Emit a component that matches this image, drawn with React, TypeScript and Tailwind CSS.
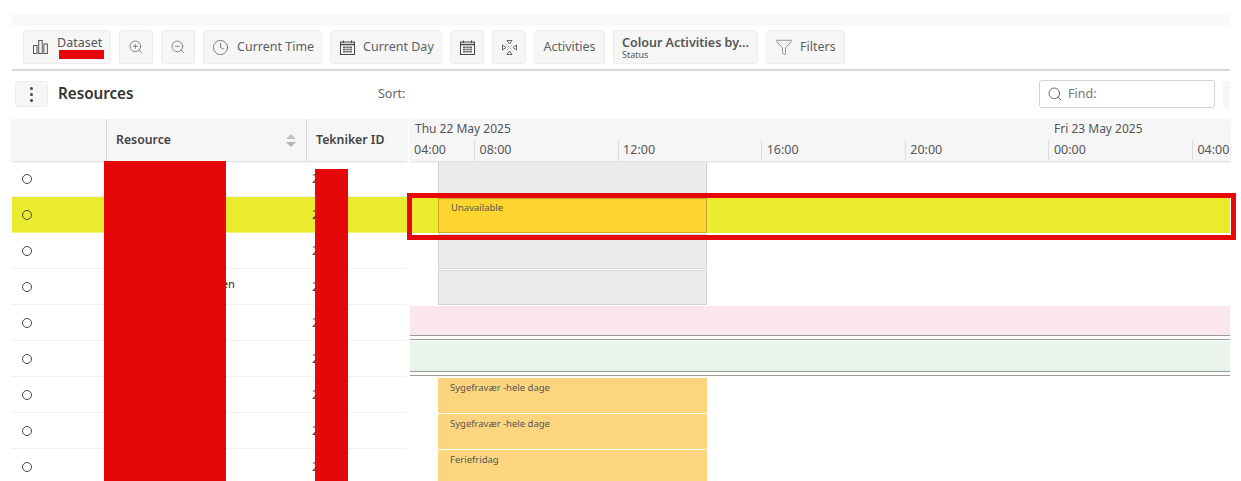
import { Clock, Filter, Search, ZoomIn, ZoomOut } from "lucide-react";
import type { ReactNode } from "react";

const BarsIcon = () => (
  <svg width="15" height="16" viewBox="0 0 15 16" fill="none" stroke="#555" strokeWidth="1">
    <rect x="0.5" y="6.5" width="3.5" height="8" />
    <rect x="5.7" y="1.5" width="3.5" height="13" />
    <rect x="10.9" y="5" width="3.5" height="9.5" />
  </svg>
);

const CalendarIcon = () => (
  <svg width="15" height="15" viewBox="0 0 15 15" fill="none" stroke="#444" strokeWidth="1">
    <rect x="0.5" y="2" width="14" height="12.5" />
    <path d="M3.5 0.5v2.5M11.5 0.5v2.5" />
    <path d="M0.5 4.5h14" strokeWidth="1.4" />
    <rect x="3" y="6.5" width="9" height="6" fill="#666" stroke="none" />
    <path d="M3 8.5h9M3 10.5h9M6 6.5v6M9 6.5v6" stroke="#fff" strokeWidth="0.6" />
  </svg>
);

const FitIcon = () => (
  <svg width="15" height="15" viewBox="0 0 15 15" fill="none" stroke="#555" strokeWidth="0.9">
    <path d="M5 0.5h5L7.5 4z" />
    <path d="M5 14.5h5L7.5 11z" />
    <path d="M0.5 5v5L4 7.5z" />
    <path d="M14.5 5v5L11 7.5z" />
    <path d="M4.5 4.5l6 6M10.5 4.5l-6 6" stroke="#aaa" strokeWidth="0.7" />
  </svg>
);

const Btn = ({ children, className = "" }: { children: ReactNode; className?: string }) => (
  <div
    className={
      "h-[34px] shrink-0 flex items-center rounded-[3px] border border-[#ededed] bg-[#f6f6f6] text-[#5f5f5f] text-[12.5px] " +
      className
    }
  >
    {children}
  </div>
);

const ticks = ["08:00", "12:00", "16:00", "20:00", "00:00", "04:00"];

const rows = [0, 1, 2, 3, 4, 5, 6, 7, 8];

const Bar = ({ label, className }: { label?: string; className: string }) => (
  <div className={"ml-[28px] w-[269px] pl-[12px] text-[9.5px] leading-[12px] text-[#555] " + className}>
    {label}
  </div>
);

const GanttRow = ({ index }: { index: number }) => {
  if (index === 0) {
    return (
      <div className="h-[36px] pt-[1px]">
        <Bar className="h-[35px] bg-[#ebebeb] border-x border-[#d4d4d4]" />
      </div>
    );
  }
  if (index === 1) {
    return (
      <div className="h-[36px] pt-[1px] bg-[#ebeb2e]">
        <Bar
          label="Unavailable"
          className="h-[35px] pl-[11px] pt-[3px] bg-[#fcd52e] border border-[#c9a62a]"
        />
      </div>
    );
  }
  if (index === 2 || index === 3) {
    return (
      <div className="h-[36px] pt-[1px]">
        <Bar className="h-[35px] bg-[#ebebeb] border border-[#d4d4d4]" />
      </div>
    );
  }
  if (index === 4 || index === 5) {
    return (
      <div className={"h-[36px] " + (index === 4 ? "pt-[1px]" : "")}>
        <div className={index === 4 ? "h-[29px] bg-[#fbe6f0]" : "h-[30px] bg-[#ebf4eb]"} />
        <div className="h-[5px] border-y border-[#9a9a9a]" />
      </div>
    );
  }
  const label = index === 8 ? "Feriefridag" : "Sygefravær -hele dage";
  return (
    <div className="h-[36px] pt-[1px]">
      <Bar label={label} className="h-[35px] pt-[4px] bg-[#fcd57e]" />
    </div>
  );
};

export default function App() {
  return (
    <div
      className="relative h-[481px] w-[1241px] overflow-hidden bg-white pt-[14px] pl-[12px] pr-[11px] text-[#444]"
      style={{ fontFamily: '"Noto Sans", "Liberation Sans", sans-serif' }}
    >
      <div className="h-[12px] bg-[#f9f9f9]" />

      {/* toolbar */}
      <div className="h-[45px] border-b-2 border-[#d9d9d9] pl-[11px] pt-[4px] flex gap-[8px]">
        <Btn className="w-[88px] pl-[9px] gap-[9px]">
          <BarsIcon />
          <div className="leading-[13px] text-[12.5px] text-[#555]">
            Dataset
            <div className="h-[9px]" />
          </div>
        </Btn>
        <Btn className="w-[34px] justify-center">
          <ZoomIn size={16} strokeWidth={1.1} />
        </Btn>
        <Btn className="w-[34px] justify-center">
          <ZoomOut size={16} strokeWidth={1.1} />
        </Btn>
        <Btn className="w-[119px] pl-[8px] gap-[8px]">
          <Clock size={17} strokeWidth={1.1} />
          Current Time
        </Btn>
        <Btn className="w-[112px] pl-[9px] gap-[8px]">
          <CalendarIcon />
          Current Day
        </Btn>
        <Btn className="w-[34px] justify-center">
          <CalendarIcon />
        </Btn>
        <Btn className="w-[34px] justify-center">
          <FitIcon />
        </Btn>
        <Btn className="w-[71px] justify-center">Activities</Btn>
        <Btn className="w-[145px] pl-[8px]">
          <div className="pt-[1px]">
            <div className="font-semibold text-[12.5px] leading-[14px] text-[#555]">Colour Activities by...</div>
            <div className="text-[9px] leading-[10px] text-[#555]">Status</div>
          </div>
        </Btn>
        <Btn className="w-[79px] pl-[8px] gap-[7px]">
          <Filter size={18} strokeWidth={0.9} />
          Filters
        </Btn>
      </div>

      {/* resources bar */}
      <div className="h-[48px] flex items-center pl-[3px] pb-[2px]">
        <div className="w-[33px] h-[26px] rounded-[3px] border border-[#ededed] bg-[#f6f6f6] flex flex-col items-center justify-center gap-[3px]">
          <span className="w-[3px] h-[3px] rounded-full bg-[#444]" />
          <span className="w-[3px] h-[3px] rounded-full bg-[#444]" />
          <span className="w-[3px] h-[3px] rounded-full bg-[#444]" />
        </div>
        <div className="ml-[10px] w-[320px] pb-[1px] text-[15.2px] font-semibold text-[#333]">Resources</div>
        <div className="text-[12.5px] text-[#666]">Sort:</div>
        <div className="ml-auto mr-[8px] w-[176px] h-[28px] rounded-[3px] border border-[#d4d4d4] flex items-center pl-[7px] gap-[5px] text-[12.5px] text-[#777]">
          <Search size={16} strokeWidth={1.3} className="text-[#555]" />
          <span className="pt-[1px]">Find:</span>
        </div>
        <div className="w-[7px] h-[26px] bg-[#f6f6f6] rounded-l-[3px]" />
      </div>

      {/* grid and timeline */}
      <div className="flex">
        <div className="w-[395px] shrink-0">
          <div className="h-[42px] flex bg-[#f6f6f6] shadow-[0_1px_2px_#d8d8d8] text-[12.3px] font-semibold text-[#444]">
            <div className="w-[95px] border-r border-[#d4d4d4]" />
            <div className="w-[200px] border-r border-[#d4d4d4] pl-[9px] pr-[10px] flex items-center justify-between">
              Resource
              <div className="flex flex-col gap-[3px]">
                <span className="w-0 h-0 border-x-[5px] border-x-transparent border-b-[5px] border-b-[#c4c4c4]" />
                <span className="w-0 h-0 border-x-[5px] border-x-transparent border-t-[5px] border-t-[#b4b4b4]" />
              </div>
            </div>
            <div className="flex-1 pl-[9px] flex items-center">Tekniker ID</div>
          </div>
          {rows.map((r) => (
            <div
              key={r}
              className={
                "h-[36px] flex items-center text-[11px] text-[#444] border-b " +
                (r === 1 ? "bg-[#ebeb2e] border-[#f5f57a]" : "border-[#f2f2f2]")
              }
            >
              <div className="w-[95px] pl-[10px]">
                <div className="w-[10px] h-[10px] rounded-full border border-[#444]" />
              </div>
              <div className="w-[128px] text-right pb-[4px] font-medium">{r === 3 ? "en" : ""}</div>
              <div className="pl-[77px] text-[13px]">2</div>
            </div>
          ))}
        </div>

        <div className="ml-[3px] flex-1 min-w-0">
          <div className="h-[42px] bg-[#f6f6f6] shadow-[0_1px_2px_#d8d8d8] ml-[1px] text-[12.5px] text-[#555]">
            <div className="h-[21px] flex pl-[4px] leading-[20px] text-[12px]">
              <span className="w-[639px]">Thu 22 May 2025</span>
              <span>Fri 23 May 2025</span>
            </div>
            <div className="h-[21px] flex leading-[20px]">
              <div className="w-[63px] pl-[3px]">04:00</div>
              {ticks.map((t, i) => (
                <div
                  key={t + i}
                  className={"shrink-0 pl-[4.5px] border-l border-[#dcdcdc] " + (i === 5 ? "w-[37px]" : "w-[143.6px]")}
                >
                  {t}
                </div>
              ))}
            </div>
          </div>
          {rows.map((r) => (
            <GanttRow key={r} index={r} />
          ))}
        </div>
      </div>

      {/* redactions */}
      <div className="absolute left-[59px] top-[50px] w-[45px] h-[9px] bg-[#e60808]" />
      <div className="absolute left-[104px] top-[161px] w-[122px] h-[320px] bg-[#e60808]" />
      <div className="absolute left-[315px] top-[169px] w-[33px] h-[312px] bg-[#e60808]" />
      <div className="absolute left-[407px] top-[193px] w-[829px] h-[47px] border-[5px] border-[#e60808]" />
    </div>
  );
}
